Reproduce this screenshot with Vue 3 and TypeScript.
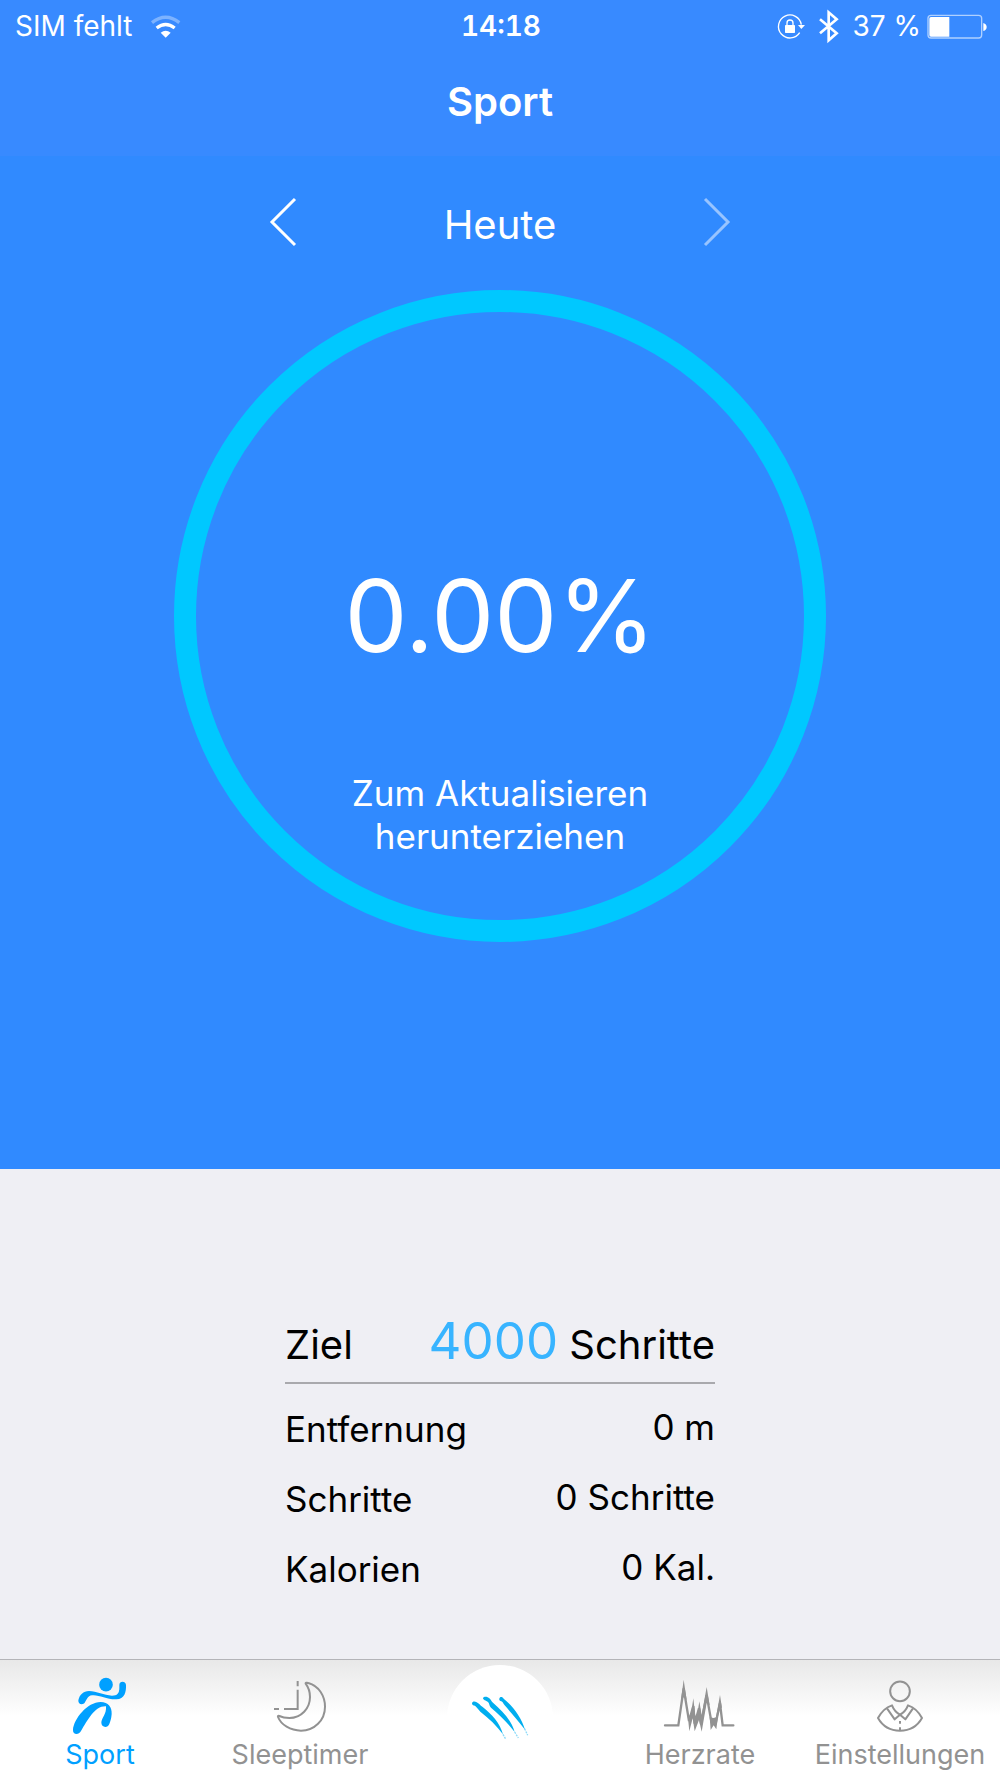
<script setup lang="ts">
import { ref } from 'vue'

interface Metric {
  label: string
  value: string
}

const progress = ref('0.00%')
const goal = ref(4000)
const metrics: Metric[] = [
  { label: 'Entfernung', value: '0 m' },
  { label: 'Schritte', value: '0 Schritte' },
  { label: 'Kalorien', value: '0 Kal.' },
]
</script>

<template>
  <div class="app">
    <header class="header">
      <div class="status">
        <div class="status-side">
          <span>SIM fehlt</span>
          <svg class="wifi" viewBox="447 36 93 69" aria-hidden="true">
            <path d="M453 59Q494 27 535 59" fill="none" stroke="#fff" stroke-opacity=".35" stroke-width="10" />
            <path d="M467 75Q494 54 521 75" fill="none" stroke="#fff" stroke-width="10" />
            <path d="M479 89Q494 78 509 89L494 104Z" fill="#fff" />
          </svg>
        </div>
        <time class="clock">14:18</time>
        <div class="status-side status-end">
          <svg class="lock" viewBox="105 30 90 84" aria-hidden="true">
            <path d="M176 92A34.500 34.500 0 1 1 181 68" fill="none" stroke="#fff" stroke-width="4" />
            <path d="M171 69h21l-11 12z" fill="#fff" />
            <rect x="132" y="69" width="30" height="24" rx="2" fill="#fff" />
            <path d="M138 70v-7a9 9 0 0 1 18 0v7" fill="none" stroke="#fff" stroke-width="4" />
          </svg>
          <svg class="bluetooth" viewBox="232 22 66 105" aria-hidden="true">
            <path d="M238 53L288 95L264 116V32L288 53L238 95" fill="none" stroke="#fff" stroke-width="8" />
          </svg>
          <span class="charge">37 %</span>
          <svg class="battery" viewBox="560 36 180 75" aria-hidden="true">
            <rect x="563" y="40" width="161" height="68" rx="9" fill="none" stroke="#fff" stroke-opacity=".6" stroke-width="4" />
            <path d="M572 45h55v59h-55q-5 0-5-5V50q0-5 5-5z" fill="#fff" />
            <path d="M729 63q10 3 10 12t-10 12z" fill="#fff" />
          </svg>
        </div>
      </div>
      <h1 class="title">Sport</h1>
    </header>

    <main class="main">
      <section class="hero">
        <nav class="days" aria-label="Tag">
          <button class="arrow" type="button" aria-label="Vorheriger Tag">
            <svg viewBox="0 0 25 48" aria-hidden="true"><path d="M24 1L1 24L24 47" /></svg>
          </button>
          <span class="day">Heute</span>
          <button class="arrow" type="button" aria-label="Nächster Tag" disabled>
            <svg viewBox="0 0 25 48" aria-hidden="true"><path d="M1 1L24 24L1 47" /></svg>
          </button>
        </nav>
        <div class="ring">
          <strong class="progress">{{ progress }}</strong>
          <p class="hint">Zum Aktualisieren<br />herunterziehen</p>
        </div>
      </section>

      <section class="stats">
        <dl class="list">
          <div class="goal">
            <dt>Ziel</dt>
            <dd><span class="goal-value">{{ goal }}</span> Schritte</dd>
          </div>
          <div v-for="metric in metrics" :key="metric.label" class="metric">
            <dt>{{ metric.label }}</dt>
            <dd>{{ metric.value }}</dd>
          </div>
        </dl>
      </section>
    </main>

    <nav class="tabs" aria-label="Hauptnavigation">
      <a class="tab active" href="#sport" aria-current="page">
        <svg class="icon" viewBox="180 102 240 186" aria-hidden="true">
          <g fill="currentColor">
            <circle cx="318" cy="134" r="20.500" />
            <path d="M235 181C238 165 250 153 267 153C290 153 312 166 336 167C352 167 358 160 358 144V135C358 122 377 122 378 135C379 155 374 178 349 178C320 179 295 163 276 166C262 168 261 178 255 187C249 197 234 194 235 181Z" />
            <path d="M219 270C221 237 262 186 302 186C325 187 336 201 335 222C334 236 331 244 328 252C323 266 303 263 304 247C305 234 320 222 318 199C285 197 263 240 243 273C236 286 218 284 219 270Z" />
          </g>
        </svg>
        <span>Sport</span>
      </a>
      <a class="tab" href="#sleeptimer">
        <svg class="icon" viewBox="780 102 240 186" aria-hidden="true">
          <g fill="none" stroke="currentColor" stroke-width="6">
            <path d="M917 131C916 128 920 127 925 129C957 138 975 168 975 200C975 241 943 272 903 272C871 272 843 254 834 231C833 228 834 226 838 228C848 233 860 234 868 234C904 234 930 205 930 171C930 155 926 143 917 131Z" />
            <path d="M893 149V207H852M893 123V139M837 207H822" />
          </g>
        </svg>
        <span>Sleeptimer</span>
      </a>
      <a class="tab" href="#sync" aria-label="Synchronisieren">
        <span class="badge">
          <svg class="claw" viewBox="210 162 180 144" aria-hidden="true">
            <g fill="#00aeef">
              <path d="M216 190C217 184 224 183 230 187C237 190 240 196 248 201C275 222 300 249 309 283C290 257 267 235 241 215C236 208 231 204 225 197C219 197 216 194 216 190Z" />
              <path d="M249 174C252 168 263 169 268 175C273 178 273 184 279 188C306 211 335 242 344 276C322 247 298 224 273 203C267 197 269 191 264 186C258 181 249 181 249 174Z" />
              <path d="M298 176C299 169 308 170 311 176C337 197 365 233 375 269C354 241 333 218 314 196C309 191 310 187 304 184C299 183 297 180 298 176Z" />
            </g>
            <path d="M309 283L318 299M344 276L355 294M374 266L383 286" fill="none" stroke="#00aeef" stroke-opacity=".45" stroke-width="4" stroke-dasharray="6 3" />
          </svg>
        </span>
      </a>
      <a class="tab" href="#herzrate">
        <svg class="icon" viewBox="180 102 240 186" aria-hidden="true">
          <path d="M195 256H235L251 145L267 243L280 198L284 251L297 205L303 252L320 166L334 244L341 240L348 246L360 190L368 256H400" fill="none" stroke="currentColor" stroke-width="7" stroke-linecap="round" />
          <path d="M251 119L260 180L251 172L243 180ZM280 175L286 228L292 222L298 184L305 225L320 141L329 196L320 188L305 275L297 240L284 274L278 235L268 274L263 225L271 233ZM360 165L366 205L358 198L349 268L341 256L332 270L329 232L341 234L348 232Z" fill="currentColor" />
        </svg>
        <span>Herzrate</span>
      </a>
      <a class="tab" href="#einstellungen">
        <svg class="icon" viewBox="780 102 240 186" aria-hidden="true">
          <g fill="none" stroke="currentColor" stroke-width="6" stroke-linejoin="round">
            <circle cx="900" cy="154" r="29.500" />
            <path d="M876 196C858 202 843 217 834 234C848 259 873 272 900 272C927 272 952 259 966 234C957 217 942 202 924 196C919 209 911 218 900 224C889 218 881 209 876 196Z" />
            <path d="M861 205L884 238L900 224L916 238L939 205" />
            <path d="M900 243V251M900 262V271" />
          </g>
        </svg>
        <span>Einstellungen</span>
      </a>
    </nav>
  </div>
</template>

<style>
body {
  margin: 0;
}
</style>

<style scoped>
.app {
  display: flex;
  flex-direction: column;
  min-height: 100vh;
  background: #efeff4;
  color: #000;
  font-family: Inter, "Liberation Sans", sans-serif;
}

.header {
  background: #388aff;
  color: #fff;
}

.status {
  display: grid;
  grid-template-columns: 1fr auto 1fr;
  align-items: center;
  height: 52px;
  padding: 0 13px 0 15px;
  font-size: 28px;
}

.status-side {
  display: flex;
  align-items: center;
  gap: 18px;
}

.status-end {
  justify-content: flex-end;
  gap: 6px;
}

.clock {
  font-weight: 600;
  font-variant-numeric: tabular-nums;
}

.wifi {
  width: 31px;
  height: 23px;
}

.lock {
  width: 30px;
  height: 28px;
  margin-right: 6px;
}

.bluetooth {
  width: 22px;
  height: 35px;
  margin-right: 6px;
}

.battery {
  width: 60px;
  height: 25px;
}

.title {
  margin: 0;
  padding: 24px 0 28px;
  font-size: 40px;
  font-weight: 600;
  line-height: 52px;
  text-align: center;
}

.main {
  display: flex;
  flex: 1;
  flex-direction: column;
}

.hero {
  display: flex;
  flex-direction: column;
  align-items: center;
  gap: 44px;
  padding: 42px 16px 227px;
  background: #308aff;
  color: #fff;
}

.days {
  display: flex;
  align-items: center;
  justify-content: space-between;
  width: 100%;
  max-width: 458px;
  height: 48px;
}

.day {
  padding-top: 4px;
  font-size: 40px;
}

.arrow {
  width: 25px;
  height: 48px;
  padding: 0;
  border: 0;
  background: none;
  color: inherit;
  cursor: pointer;
}

.arrow:disabled {
  opacity: 0.5;
  cursor: default;
}

.arrow svg {
  display: block;
  overflow: visible;
  width: 25px;
  height: 48px;
  fill: none;
  stroke: currentColor;
  stroke-width: 3;
}

.ring {
  box-sizing: border-box;
  display: flex;
  flex-direction: column;
  align-items: center;
  gap: 96px;
  width: 100%;
  max-width: 652px;
  aspect-ratio: 1;
  padding-top: 244px;
  border: 22px solid #00c8ff;
  border-radius: 50%;
  text-align: center;
}

.progress {
  font-size: 100px;
  font-weight: 400;
  line-height: 120px;
}

.hint {
  margin: 0;
  font-size: 35px;
  line-height: 43px;
}

.stats {
  display: flex;
  justify-content: center;
  padding: 138px 16px 46px;
}

.list {
  width: 100%;
  max-width: 430px;
  margin: 0;
}

.list dd {
  margin: 0;
}

.goal {
  display: flex;
  align-items: baseline;
  justify-content: space-between;
  margin-bottom: 10px;
  padding-bottom: 3px;
  border-bottom: 2px solid #a9a9ad;
  font-size: 40px;
  line-height: 68px;
}

.goal-value {
  color: #38b4ff;
  font-size: 51px;
}

.metric {
  display: flex;
  align-items: flex-start;
  justify-content: space-between;
  font-size: 35px;
  line-height: 70px;
}

.metric dd {
  margin-top: -2px;
}

.tabs {
  display: grid;
  grid-template-columns: repeat(5, 1fr);
  box-sizing: border-box;
  height: 119px;
  border-top: 1px solid #b4b4b8;
  background: linear-gradient(#e8e8e8, #fff 56px);
}

.tab {
  display: flex;
  flex-direction: column;
  align-items: center;
  gap: 1px;
  padding-top: 14px;
  color: #929292;
  font-size: 27px;
  line-height: 36px;
  text-decoration: none;
}

.tab.active {
  color: #00a0ff;
}

.icon {
  width: 80px;
  height: 62px;
}

.badge {
  display: flex;
  align-items: center;
  justify-content: center;
  width: 106px;
  height: 106px;
  margin-top: -9px;
  border-radius: 50%;
  background: #fff;
}

.claw {
  width: 60px;
  height: 48px;
}
</style>
